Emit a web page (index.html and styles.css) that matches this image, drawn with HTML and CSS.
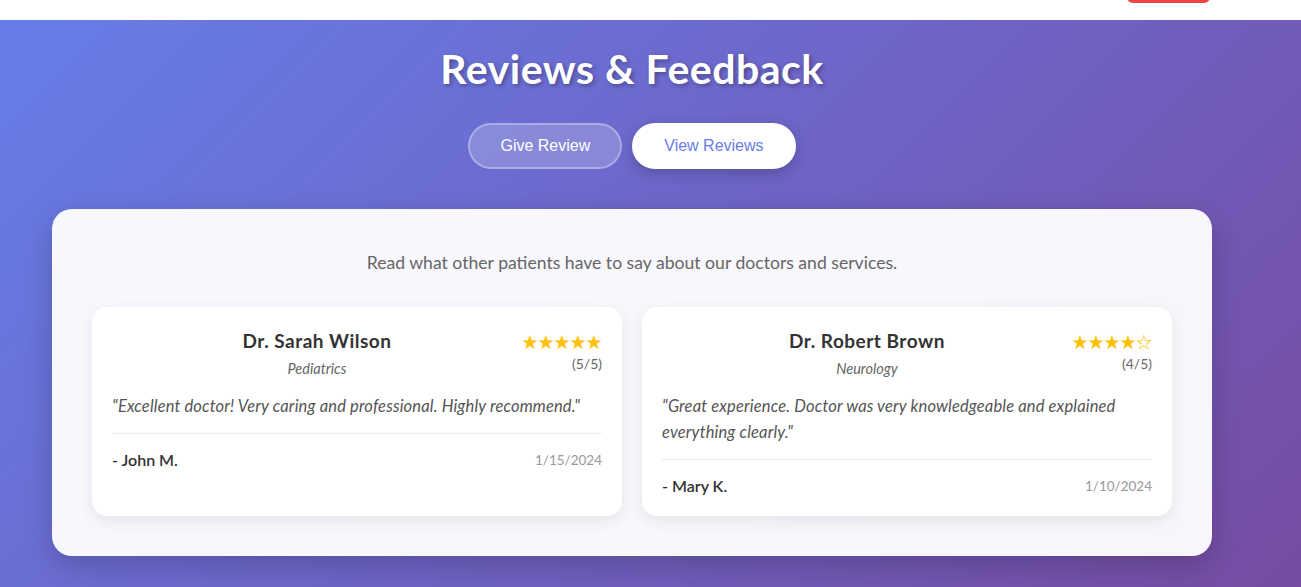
FILE: index.html
```html
<!DOCTYPE html>
<html lang="en">
<head>
<meta charset="utf-8">
<title>Reviews &amp; Feedback</title>
<link rel="stylesheet" href="styles.css">
</head>
<body>
<header class="site-header">
  <div class="header-inner">
    <div class="logo">MyDoctor Appointy</div>
    <button class="logout-btn">Logout</button>
  </div>
</header>
<main class="reviews-section">
  <div class="container">
    <h1 class="page-title">Reviews &amp; Feedback</h1>
    <div class="tabs">
      <button class="tab-btn tab-outline">Give Review</button>
      <button class="tab-btn tab-active">View Reviews</button>
    </div>
    <section class="panel">
      <p class="intro">Read what other patients have to say about our doctors and services.</p>
      <div class="review-grid">
        <article class="review-card">
          <div class="review-head">
            <div class="doctor-info">
              <h3 class="doctor-name">Dr. Sarah Wilson</h3>
              <p class="specialty">Pediatrics</p>
            </div>
            <div class="rating">
              <div class="stars">★★★★★</div>
              <div class="score">(5/5)</div>
            </div>
          </div>
          <p class="review-text">"Excellent doctor! Very caring and professional. Highly recommend."</p>
          <div class="review-foot">
            <span class="patient">- John M.</span>
            <span class="date">1/15/2024</span>
          </div>
        </article>
        <article class="review-card">
          <div class="review-head">
            <div class="doctor-info">
              <h3 class="doctor-name">Dr. Robert Brown</h3>
              <p class="specialty">Neurology</p>
            </div>
            <div class="rating">
              <div class="stars">★★★★☆</div>
              <div class="score">(4/5)</div>
            </div>
          </div>
          <p class="review-text">"Great experience. Doctor was very knowledgeable and explained everything clearly."</p>
          <div class="review-foot">
            <span class="patient">- Mary K.</span>
            <span class="date">1/10/2024</span>
          </div>
        </article>
      </div>
    </section>
  </div>
</main>
</body>
</html>
```

FILE: styles.css
```css
* { box-sizing: border-box; }

html, body {
  margin: 0;
  padding: 0;
}

body {
  font-family: Lato, "Open Sans", sans-serif;
  background: linear-gradient(135deg, #667eea 0%, #764ba2 100%);
  min-height: 587px;
  overflow: hidden;
}

.site-header {
  background: #ffffff;
  height: 70px;
  margin-top: -50px;
}

.header-inner {
  width: 1160px;
  margin-left: 52px;
  height: 70px;
  display: flex;
  align-items: center;
  justify-content: space-between;
}

.logo {
  font-size: 26px;
  font-weight: 700;
  color: #2c3e50;
  padding-left: 40px;
}

.logout-btn {
  height: 36px;
  width: 83px;
  margin-right: 2px;
  border: none;
  border-radius: 6px;
  background: #ef4444;
  color: #fff;
  font-family: "Liberation Sans", Arial, sans-serif;
  font-size: 14px;
}

.reviews-section {
  padding: 25px 0 60px;
}

.container {
  width: 1160px;
  margin-left: 52px;
  display: flex;
  flex-direction: column;
  align-items: center;
}

.page-title {
  margin: 0;
  font-size: 41px;
  line-height: 48px;
  font-weight: 700;
  letter-spacing: 0.5px;
  color: #ffffff;
  text-shadow: 2px 2px 4px rgba(0, 0, 0, 0.3);
}

.tabs {
  margin-top: 30px;
  display: flex;
  gap: 10px;
}

.tab-btn {
  font-family: "Liberation Sans", Arial, sans-serif;
  font-size: 16px;
  line-height: 18px;
  padding: 12px 30px;
  border-radius: 25px;
  border: 2px solid rgba(255, 255, 255, 0.3);
  cursor: pointer;
}

.tab-outline {
  background: rgba(255, 255, 255, 0.2);
  color: #ffffff;
}

.tab-active {
  background: #ffffff;
  border-color: #ffffff;
  color: #667eea;
  box-shadow: 0 5px 15px rgba(0, 0, 0, 0.2);
}

.panel {
  margin-top: 40px;
  width: 100%;
  background: rgba(255, 255, 255, 0.95);
  border-radius: 20px;
  padding: 40px;
  box-shadow: 0 10px 30px rgba(0, 0, 0, 0.2);
}

.intro {
  margin: 0 0 30px;
  text-align: center;
  font-size: 17.6px;
  line-height: 28px;
  color: #666666;
}

.review-grid {
  display: grid;
  grid-template-columns: 1fr 1fr;
  gap: 20px;
}

.review-card {
  background: #ffffff;
  border-radius: 15px;
  padding: 20px 20px 19px;
  box-shadow: 0 5px 15px rgba(0, 0, 0, 0.08);
}

.review-head {
  display: flex;
  justify-content: space-between;
  align-items: flex-start;
  margin-bottom: 14px;
}

.doctor-info {
  flex: 1;
  text-align: center;
}

.doctor-name {
  margin: 0 0 3px;
  font-size: 19px;
  line-height: 28px;
  font-weight: 700;
  letter-spacing: 0.5px;
  color: #333333;
}

.specialty {
  margin: 0;
  font-size: 14.5px;
  line-height: 21px;
  font-style: italic;
  color: #666666;
}

.rating {
  text-align: right;
  padding-top: 3px;
}

.stars {
  font-family: "Noto Sans CJK SC", "DejaVu Sans", sans-serif;
  font-size: 16px;
  line-height: 22px;
  color: #ffc107;
}

.score {
  margin-top: 2px;
  font-size: 14px;
  line-height: 20px;
  color: #666666;
}

.review-text {
  margin: 0 0 14px;
  font-size: 16.5px;
  line-height: 26px;
  font-style: italic;
  letter-spacing: 0.15px;
  color: #555555;
}

.review-foot {
  border-top: 1px solid #eeeeee;
  padding-top: 15px;
  display: flex;
  justify-content: space-between;
  align-items: center;
  line-height: 22px;
}

.patient {
  font-size: 16px;
  font-weight: 600;
  color: #333333;
}

.date {
  font-size: 13.5px;
  color: #999999;
}
```
